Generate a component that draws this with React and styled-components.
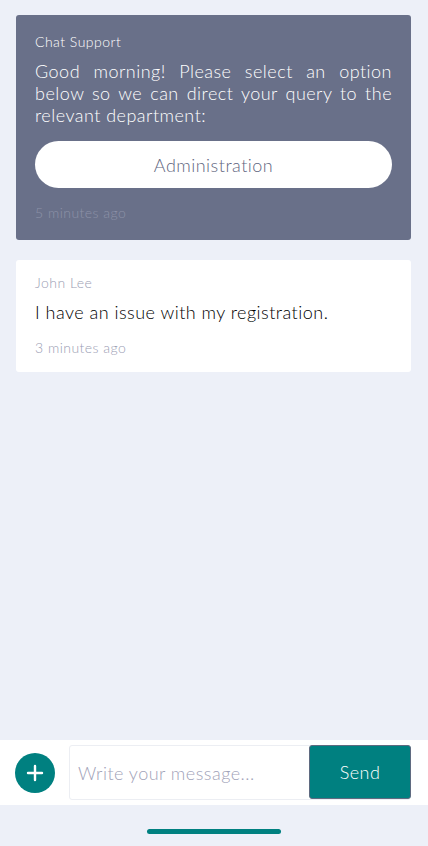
import React from "react";
import styled, { createGlobalStyle } from "styled-components";

const Global = createGlobalStyle`
  html, body { margin: 0; padding: 0; background: #edf0f8; }
  body { font-family: Lato, "Open Sans", sans-serif; letter-spacing: 0.03em; font-weight: 300; }
  * { box-sizing: border-box; }
`;

const Page = styled.div`
  min-height: 100vh;
  display: flex;
  flex-direction: column;
  background: #edf0f8;
`;

const Messages = styled.div`
  flex: 1;
  display: flex;
  flex-direction: column;
  gap: 20px;
  padding: 15px 17px 0 16px;
`;

const Bubble = styled.div`
  background: ${(p) => (p.$agent ? "#697089" : "#ffffff")};
  border-radius: 3px;
  padding: ${(p) => (p.$agent ? "17px 19px 17px 19px" : "13px 19px 14px 19px")};
  display: flex;
  flex-direction: column;
`;

const Sender = styled.div`
  font-size: 14px;
  line-height: 20px;
  color: ${(p) => (p.$agent ? "#ffffff" : "#9a9db3")};
`;

const Text = styled.div`
  margin-top: 8px;
  font-size: 18px;
  line-height: 22px;
  text-align: justify;
  color: ${(p) => (p.$agent ? "#ffffff" : "#000000")};
`;

const Option = styled.button`
  margin-top: 15px;
  height: 47px;
  width: 100%;
  border: none;
  border-radius: 24px;
  background: #ffffff;
  color: #5f6680;
  font-family: inherit;
  font-weight: inherit;
  letter-spacing: inherit;
  font-size: 18px;
  cursor: pointer;
`;

const Time = styled.div`
  margin-top: 15px;
  font-size: 14px;
  line-height: 20px;
  color: ${(p) => (p.$agent ? "#8d92a8" : "#9a9db3")};
`;

const Composer = styled.div`
  background: #ffffff;
  height: 65px;
  display: flex;
  align-items: center;
  padding: 0 17px 0 15px;
`;

const AddButton = styled.button`
  width: 40px;
  height: 40px;
  border-radius: 50%;
  border: none;
  background: #008080;
  display: flex;
  align-items: center;
  justify-content: center;
  padding: 0;
  flex-shrink: 0;
`;

const InputWrap = styled.div`
  margin-left: 14px;
  flex: 1;
  height: 55px;
  display: flex;
  border: 1px solid #eceef3;
  border-radius: 3px;
`;

const Input = styled.input`
  flex: 1;
  min-width: 0;
  border: none;
  outline: none;
  background: transparent;
  padding: 0 8px;
  font-family: inherit;
  font-weight: inherit;
  letter-spacing: inherit;
  font-size: 18px;
  color: #333;
  &::placeholder { color: #9fa2b8; }
`;

const Send = styled.button`
  width: 102px;
  height: 54px;
  margin: -1px -1px 0 0;
  border: 1px solid #5f6a80;
  border-radius: 3px;
  background: #008080;
  color: #ffffff;
  font-family: inherit;
  font-weight: inherit;
  letter-spacing: inherit;
  font-size: 18px;
`;

const HomeArea = styled.div`
  height: 41px;
  display: flex;
  justify-content: center;
  padding-top: 24px;
`;

const HomeBar = styled.div`
  width: 134px;
  height: 5px;
  border-radius: 3px;
  background: #008080;
`;

export default function App() {
  return (
    <Page>
      <Global />
      <Messages>
        <Bubble $agent>
          <Sender $agent>Chat Support</Sender>
          <Text $agent>
            Good morning! Please select an option below so we can direct your query to the relevant department:
          </Text>
          <Option>Administration</Option>
          <Time $agent>5 minutes ago</Time>
        </Bubble>
        <Bubble>
          <Sender>John Lee</Sender>
          <Text>I have an issue with my registration.</Text>
          <Time>3 minutes ago</Time>
        </Bubble>
      </Messages>
      <Composer>
        <AddButton aria-label="Add">
          <svg width="18" height="18" viewBox="0 0 18 18">
            <path d="M9 2v14M2 9h14" stroke="#fff" strokeWidth="2.4" strokeLinecap="round" />
          </svg>
        </AddButton>
        <InputWrap>
          <Input placeholder="Write your message..." />
          <Send>Send</Send>
        </InputWrap>
      </Composer>
      <HomeArea>
        <HomeBar />
      </HomeArea>
    </Page>
  );
}
